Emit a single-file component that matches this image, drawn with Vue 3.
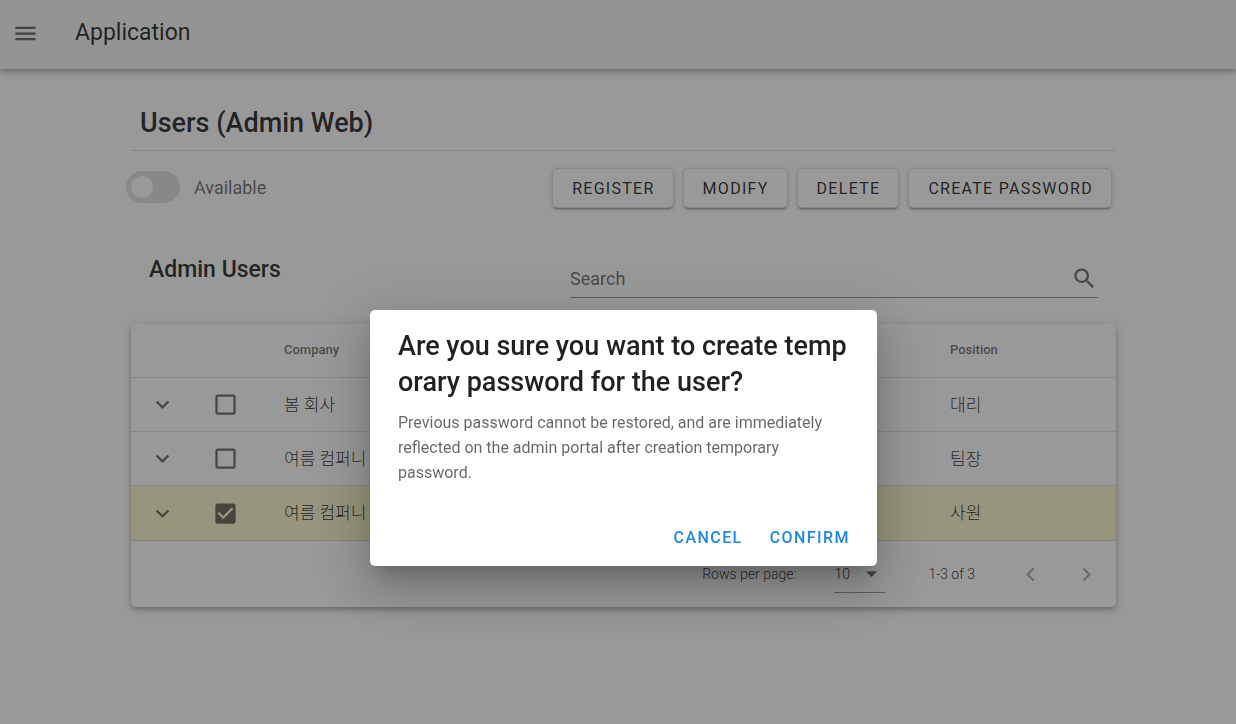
<script setup>
import { ref } from 'vue'

const available = ref(false)
const search = ref('')
const perPage = ref('10')
const actions = ['Register', 'Modify', 'Delete', 'Create password']
const users = ref([
  { id: 1, company: '봄 회사', position: '대리', selected: false },
  { id: 2, company: '여름 컴퍼니', position: '팀장', selected: false },
  { id: 3, company: '여름 컴퍼니', position: '사원', selected: true },
])
</script>

<template>
  <div class="app">
    <header class="app-bar">
      <button class="icon-btn" type="button" aria-label="Menu">
        <svg viewBox="0 0 24 24"><path d="M3,6H21V8H3V6M3,11H21V13H3V11M3,16H21V18H3V16Z" /></svg>
      </button>
      <span class="app-title">Application</span>
    </header>

    <main class="content">
      <h1 class="page-title">Users (Admin Web)</h1>

      <div class="toolbar">
        <label class="switch">
          <input v-model="available" type="checkbox" role="switch" />
          <span>Available</span>
        </label>
        <div class="actions">
          <button v-for="a in actions" :key="a" class="btn" type="button">{{ a }}</button>
        </div>
      </div>

      <div class="list-head">
        <h2 class="list-title">Admin Users</h2>
        <div class="search">
          <input v-model="search" type="text" placeholder="Search" aria-label="Search" />
          <svg viewBox="0 0 24 24"><path d="M9.5,3A6.5,6.5 0 0,1 16,9.5C16,11.11 15.41,12.59 14.44,13.73L14.71,14H15.5L20.5,19L19,20.5L14,15.5V14.71L13.73,14.44C12.59,15.41 11.11,16 9.5,16A6.5,6.5 0 0,1 3,9.5A6.5,6.5 0 0,1 9.5,3M9.5,5C7,5 5,7 5,9.5C5,12 7,14 9.5,14C12,14 14,12 14,9.5C14,7 12,5 9.5,5Z" /></svg>
        </div>
      </div>

      <section class="card">
        <table class="users">
          <colgroup>
            <col class="col-expand" />
            <col class="col-check" />
            <col />
            <col class="col-position" />
          </colgroup>
          <thead>
            <tr>
              <th></th>
              <th></th>
              <th scope="col">Company</th>
              <th scope="col">Position</th>
            </tr>
          </thead>
          <tbody>
            <tr v-for="u in users" :key="u.id" :class="{ selected: u.selected }">
              <td>
                <button class="expand" type="button" aria-label="Expand row">
                  <svg viewBox="0 0 24 24"><path d="M7.41,8.58L12,13.17L16.59,8.58L18,10L12,16L6,10L7.41,8.58Z" /></svg>
                </button>
              </td>
              <td>
                <label class="check">
                  <input v-model="u.selected" type="checkbox" aria-label="Select row" />
                  <svg v-if="u.selected" viewBox="0 0 24 24"><path d="M10,17L5,12L6.41,10.58L10,14.17L17.59,6.58L19,8M19,3H5C3.89,3 3,3.89 3,5V19A2,2 0 0,0 5,21H19A2,2 0 0,0 21,19V5C21,3.89 20.1,3 19,3Z" /></svg>
                  <svg v-else viewBox="0 0 24 24"><path d="M19,3H5C3.89,3 3,3.89 3,5V19A2,2 0 0,0 5,21H19A2,2 0 0,0 21,19V5A2,2 0 0,0 19,3M19,5V19H5V5H19Z" /></svg>
                </label>
              </td>
              <td class="text">{{ u.company }}</td>
              <td class="text">{{ u.position }}</td>
            </tr>
          </tbody>
        </table>

        <footer class="pager">
          <label for="per-page">Rows per page:</label>
          <div class="select">
            <select id="per-page" v-model="perPage">
              <option>10</option>
            </select>
            <svg viewBox="0 0 24 24"><path d="M7,10L12,15L17,10H7Z" /></svg>
          </div>
          <span class="range">1-3 of 3</span>
          <button class="page-btn" type="button" disabled aria-label="Previous page">
            <svg viewBox="0 0 24 24"><path d="M15.41,16.58L10.83,12L15.41,7.41L14,6L8,12L14,18L15.41,16.58Z" /></svg>
          </button>
          <button class="page-btn" type="button" disabled aria-label="Next page">
            <svg viewBox="0 0 24 24"><path d="M8.59,16.58L13.17,12L8.59,7.41L10,6L16,12L10,18L8.59,16.58Z" /></svg>
          </button>
        </footer>
      </section>
    </main>

    <div class="scrim">
      <div class="dialog" role="dialog" aria-modal="true" aria-labelledby="dialog-title">
        <h2 id="dialog-title">Are you sure you want to create temporary password for the user?</h2>
        <p>Previous password cannot be restored, and are immediately reflected on the admin portal after creation temporary password.</p>
        <div class="dialog-actions">
          <button type="button">Cancel</button>
          <button type="button">Confirm</button>
        </div>
      </div>
    </div>
  </div>
</template>

<style>
body {
  margin: 0;
  overflow: hidden;
}
</style>

<style scoped>
.app {
  min-height: 100vh;
  background: #fff;
  color: rgba(0, 0, 0, 0.87);
  font-family: Roboto, "Noto Sans CJK KR", sans-serif;
  font-size: 16px;
}
* {
  box-sizing: border-box;
}
button,
input,
select {
  font: inherit;
  color: inherit;
  background: none;
  border: 0;
  margin: 0;
  padding: 0;
}
svg {
  display: block;
  width: 27px;
  height: 27px;
  fill: rgba(0, 0, 0, 0.6);
}
.app-bar {
  display: flex;
  align-items: center;
  gap: 36px;
  height: 69px;
  padding: 0 12px 2px;
  background: #f5f5f5;
  box-shadow: 0 2px 4px -1px rgba(0, 0, 0, 0.2), 0 4px 6px rgba(0, 0, 0, 0.14), 0 1px 11px rgba(0, 0, 0, 0.12);
}
.app-title {
  padding-bottom: 2px;
  font-size: 23px;
  line-height: 28px;
}
.content {
  padding: 36px 120px 0 131px;
}
.page-title {
  margin: 0;
  padding: 0 9px 9px;
  border-bottom: 1px solid rgba(0, 0, 0, 0.12);
  font-size: 27px;
  font-weight: 500;
  line-height: 36px;
}
.toolbar {
  display: flex;
  justify-content: space-between;
  align-items: flex-start;
  padding: 17px 4px 0 0;
}
.switch {
  display: flex;
  align-items: center;
  gap: 14px;
  margin-left: -5px;
  padding-top: 3px;
  font-size: 18px;
  color: rgba(0, 0, 0, 0.6);
}
.switch input {
  appearance: none;
  width: 54px;
  height: 32px;
  padding: 5px;
  border-radius: 16px;
  background: rgba(0, 0, 0, 0.12);
}
.switch input::before {
  content: "";
  display: block;
  width: 22px;
  height: 22px;
  border-radius: 50%;
  background: #fff;
}
.actions {
  display: flex;
  gap: 9px;
}
.btn {
  height: 40px;
  padding: 0 18px 0 19px;
  border: 1px solid rgba(0, 0, 0, 0.12);
  border-radius: 5px;
  background: #fff;
  box-shadow: 0 3px 1px -2px rgba(0, 0, 0, 0.2), 0 2px 2px rgba(0, 0, 0, 0.14), 0 1px 5px rgba(0, 0, 0, 0.12);
  font-weight: 400;
  letter-spacing: 0.08em;
  text-transform: uppercase;
}
.list-head {
  display: flex;
  justify-content: space-between;
  padding: 45px 18px 26px;
}
.list-title {
  margin: 0;
  font-size: 23px;
  font-weight: 500;
  line-height: 34px;
}
.search {
  display: flex;
  align-items: center;
  flex-basis: 528px;
  height: 45px;
  padding-top: 7px;
  border-bottom: 1px solid rgba(0, 0, 0, 0.42);
}
.search input {
  flex: 1;
  min-width: 0;
  font-size: 18px;
  outline: 0;
}
.search input::placeholder {
  color: rgba(0, 0, 0, 0.6);
  opacity: 1;
}
.card {
  border-radius: 5px;
  background: #fff;
  box-shadow: 0 2px 4px -1px rgba(0, 0, 0, 0.2), 0 4px 6px rgba(0, 0, 0, 0.14), 0 1px 11px rgba(0, 0, 0, 0.12);
}
.users {
  width: 100%;
  table-layout: fixed;
  border-collapse: separate;
  border-spacing: 0;
}
.col-expand {
  width: 63px;
}
.col-check {
  width: 72px;
}
.col-position {
  width: 184px;
}
.users th,
.users td {
  height: 54px;
  padding: 0 18px;
  border-bottom: 1px solid rgba(0, 0, 0, 0.12);
  text-align: left;
}
.users th {
  padding-bottom: 2px;
  font-size: 13px;
  font-weight: 500;
  color: rgba(0, 0, 0, 0.6);
}
.users td {
  font-size: 17px;
  font-weight: 300;
}
.users .text {
  padding-bottom: 3px;
}
.users tr:last-child td {
  height: 55px;
}
.selected td {
  background: #fafacd;
}
.expand,
.check {
  display: block;
}
.check input {
  position: absolute;
  opacity: 0;
}
.pager {
  display: flex;
  align-items: center;
  justify-content: flex-end;
  height: 66px;
  padding-right: 16px;
  font-size: 14px;
  font-weight: 300;
}
.select {
  display: grid;
  align-items: center;
  width: 51px;
  height: 37px;
  margin: 0 43px 0 38px;
  border-bottom: 1px solid rgba(0, 0, 0, 0.42);
}
.select > * {
  grid-area: 1 / 1;
}
.select select {
  appearance: none;
  width: 100%;
}
.select svg {
  justify-self: end;
  pointer-events: none;
}
.page-btn {
  margin-left: 29px;
}
.range + .page-btn {
  margin-left: 42px;
}
.page-btn svg {
  opacity: 0.55;
}
.scrim {
  position: fixed;
  inset: 0;
  display: flex;
  justify-content: center;
  align-items: flex-start;
  padding: 310px 0 0 11px;
  background: rgba(33, 33, 33, 0.46);
}
.dialog {
  width: 507px;
  padding: 18px 27px 9px 28px;
  border-radius: 5px;
  background: #fff;
  box-shadow: 0 12px 17px -8px rgba(0, 0, 0, 0.2), 0 27px 43px 3px rgba(0, 0, 0, 0.14), 0 10px 52px 9px rgba(0, 0, 0, 0.12);
}
.dialog h2 {
  margin: 0;
  font-size: 27px;
  font-weight: 500;
  line-height: 36px;
  word-break: break-all;
}
.dialog p {
  margin: 10px 0 32px;
  line-height: 25px;
  color: rgba(0, 0, 0, 0.6);
}
.dialog-actions {
  display: flex;
  justify-content: flex-end;
  gap: 27px;
}
.dialog-actions button {
  height: 40px;
  color: #1e88e5;
  font-weight: 500;
  letter-spacing: 0.09em;
  text-transform: uppercase;
}
</style>
